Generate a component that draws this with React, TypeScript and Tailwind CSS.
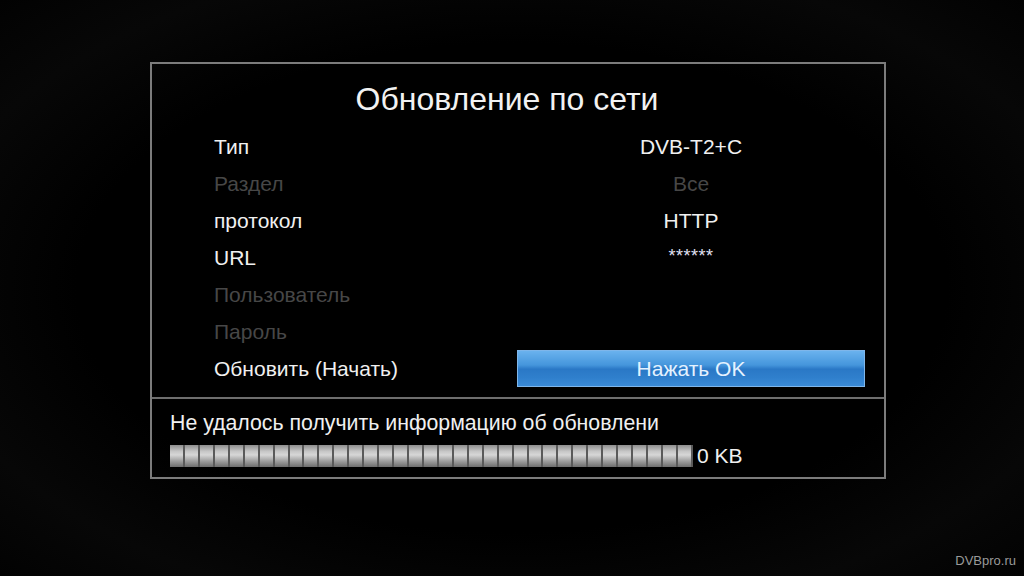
import React from "react";

type Row = {
  label: string;
  value?: string;
  disabled?: boolean;
  button?: boolean;
  stars?: boolean;
};

const rows: Row[] = [
  { label: "Тип", value: "DVB-T2+C" },
  { label: "Раздел", value: "Все", disabled: true },
  { label: "протокол", value: "HTTP" },
  { label: "URL", value: "******", stars: true },
  { label: "Пользователь", disabled: true },
  { label: "Пароль", disabled: true },
  { label: "Обновить (Начать)", button: true },
];

const SEGMENTS = 35;

const App: React.FC = () => {
  return (
    <div
      className="relative w-[1024px] h-[576px] overflow-hidden bg-black text-white"
      style={{ fontFamily: '"Liberation Sans", Arial, sans-serif' }}
    >
      <div className="absolute inset-0 bg-[radial-gradient(ellipse_at_center,#000_60%,#070707_82%,#020202_100%)]" />

      <div className="relative pt-[62px] pl-[150px]">
        <div className="w-[736px] h-[417px] border-2 border-[#7c7c7c] flex flex-col">
          {/* top part */}
          <div className="h-[333px] flex flex-col">
            <div className="pt-[16px] h-[64px] text-center text-[32px] leading-[38px] text-[#f2f2f2] pr-[22px]">
              Обновление по сети
            </div>

            <div className="flex flex-col">
              {rows.map((row) => (
                <div key={row.label} className="flex h-[37px] items-center text-[21px]">
                  <div
                    className={`w-[365px] pl-[62px] ${
                      row.disabled ? "text-[#474747]" : "text-[#f0f0f0]"
                    }`}
                  >
                    {row.label}
                  </div>
                  <div className="w-[348px] h-full flex items-center justify-center">
                    {row.button ? (
                      <div className="w-full h-[37px] flex items-center justify-center border border-[#7fb6ea] bg-[linear-gradient(to_bottom,#6ab2ee_0%,#4596dc_40%,#2a78c6_52%,#2f7fcc_75%,#3a8ad6_100%)] text-[#e4f2ff]">
                        Нажать OK
                      </div>
                    ) : row.stars ? (
                      <span className="text-[18px] leading-none tracking-[0.5px] text-[#e0e0f4] -mt-[3px]">
                        {row.value}
                      </span>
                    ) : (
                      <span className={row.disabled ? "text-[#474747]" : "text-[#f0f0f0]"}>
                        {row.value}
                      </span>
                    )}
                  </div>
                </div>
              ))}
            </div>
          </div>

          {/* divider */}
          <div className="h-[2px] bg-[#6e6e6e]" />

          {/* bottom part */}
          <div className="flex-1 pl-[18px] pt-[12px]">
            <div className="text-[21.3px] leading-[24px] text-[#f0f0f0]">
              Не удалось получить информацию об обновлени
            </div>
            <div className="mt-[10px] flex items-center">
              <div className="w-[523px] h-[22px] flex bg-[#555]">
                {Array.from({ length: SEGMENTS }, (_, i) => (
                  <div
                    key={i}
                    className="flex-1 border-r-2 border-[#5a5a5a] bg-[linear-gradient(to_bottom,#8e8e8e_0%,#c8c8c8_30%,#d6d6d6_45%,#a4a4a4_70%,#6e6e6e_100%)]"
                  />
                ))}
              </div>
              <span className="ml-[4px] text-[21px] leading-[22px] text-[#f0f0f0]">0 KB</span>
            </div>
          </div>
        </div>
      </div>

      <div className="absolute right-[8px] bottom-[6px] text-[13px] text-[#9a9a9a]">DVBpro.ru</div>
    </div>
  );
};

export default App;
